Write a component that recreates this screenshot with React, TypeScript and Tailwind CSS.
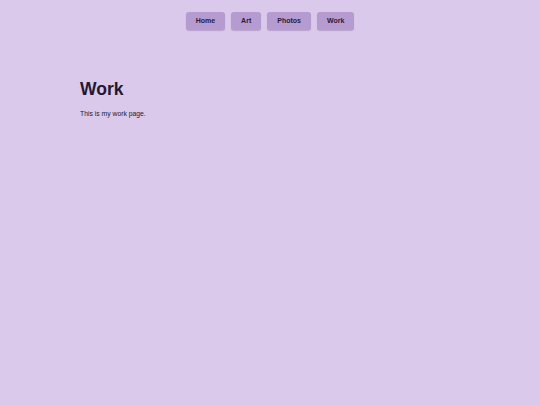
export default function App() {
  const links = ['Home', 'Art', 'Photos', 'Work'];

  return (
    <div className="min-h-[405px] bg-[#dac9eb] font-['Liberation_Sans',Arial,sans-serif] text-[#241830]">
      {/* Nav */}
      <nav className="flex justify-center gap-[6px] pt-[12px]">
        {links.map((l) => (
          <button
            key={l}
            type="button"
            className="h-[18px] px-[10px] rounded-[3px] bg-[#b69bd0] text-[7px] font-bold text-[#2a1a3a] shadow-[0_1px_1px_rgba(80,50,110,0.25)]"
          >
            {l}
          </button>
        ))}
      </nav>

      {/* Content */}
      <main className="pl-[80px] pt-[51px]">
        <h1 className="text-[17.5px] font-bold leading-none">Work</h1>
        <p className="mt-[10px] text-[6.8px]">This is my work page.</p>
      </main>
    </div>
  );
}
